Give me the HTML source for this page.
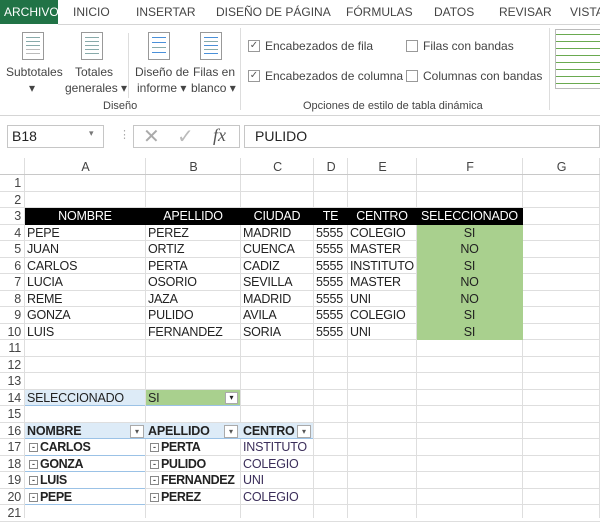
<!DOCTYPE html>
<html><head><meta charset="utf-8"><style>
*{margin:0;padding:0;box-sizing:border-box}
body{width:600px;height:518px;overflow:hidden;background:#fff;font-family:"Liberation Sans",Arial,sans-serif;position:relative;color:#222}
.a{position:absolute;white-space:nowrap}
.tab{top:5px;font-size:12px;color:#444}
.rl{font-size:12px;color:#444;text-align:center}
.ic{position:absolute;width:22px;height:28px;border:1px solid #999;background:#fff}
.ic i{position:absolute;left:3px;right:3px;height:1px;background:#8aa}
.cb{width:12px;height:12px;border:1px solid #999;background:#fff;font-size:10px;line-height:10px;text-align:center;color:#555}
.c{position:absolute;font-size:12.5px;letter-spacing:-0.2px;line-height:16px;overflow:hidden;padding-left:2px;color:#222;white-space:nowrap}
.g{position:absolute;background:#dedede}
</style></head><body>
<div class="a" style="left:0;top:0;width:58px;height:24px;background:#217346"></div>
<div class="a tab" style="left:4px;color:#fff">ARCHIVO</div>
<div class="a tab" style="left:73px">INICIO</div>
<div class="a tab" style="left:136px">INSERTAR</div>
<div class="a tab" style="left:216px">DISEÑO DE PÁGINA</div>
<div class="a tab" style="left:346px">FÓRMULAS</div>
<div class="a tab" style="left:434px">DATOS</div>
<div class="a tab" style="left:499px">REVISAR</div>
<div class="a tab" style="left:570px">VISTA</div>
<div class="a" style="left:58px;top:24px;width:542px;height:1px;background:#d5d5d5"></div>
<div class="ic" style="left:22px;top:32px"><i style="top:4px"></i><i style="top:8px"></i><i style="top:12px"></i><i style="top:16px;background:#bbb"></i><i style="top:20px;background:#bbb"></i></div>
<div class="ic" style="left:81px;top:32px"><i style="top:4px"></i><i style="top:8px"></i><i style="top:12px"></i><i style="top:16px"></i><i style="top:20px"></i></div>
<div class="ic" style="left:148px;top:32px"><i style="top:4px;background:#4a90d9"></i><i style="top:9px;background:#4a90d9"></i><i style="top:14px"></i><i style="top:19px;background:#4a90d9"></i></div>
<div class="ic" style="left:200px;top:32px"><i style="top:4px;background:#4a90d9"></i><i style="top:8px"></i><i style="top:12px;background:#4a90d9"></i><i style="top:16px"></i><i style="top:20px;background:#4a90d9"></i></div>
<div class="a rl" style="left:6px;top:65px">Subtotales</div>
<div class="a rl" style="left:29px;top:81px">▾</div>
<div class="a rl" style="left:75px;top:65px">Totales</div>
<div class="a rl" style="left:65px;top:81px">generales ▾</div>
<div class="a rl" style="left:135px;top:65px">Diseño de</div>
<div class="a rl" style="left:137px;top:81px">informe ▾</div>
<div class="a rl" style="left:193px;top:65px">Filas en</div>
<div class="a rl" style="left:191px;top:81px">blanco ▾</div>
<div class="a rl" style="left:103px;top:100px;font-size:11px">Diseño</div>
<div class="a" style="left:128px;top:33px;width:1px;height:65px;background:#ddd"></div>
<div class="a" style="left:240px;top:28px;width:1px;height:82px;background:#ddd"></div>
<div class="a cb" style="left:248px;top:40px">✓</div>
<div class="a rl" style="left:265px;top:39px">Encabezados de fila</div>
<div class="a cb" style="left:248px;top:70px">✓</div>
<div class="a rl" style="left:265px;top:69px">Encabezados de columna</div>
<div class="a cb" style="left:406px;top:40px"></div>
<div class="a rl" style="left:423px;top:39px">Filas con bandas</div>
<div class="a cb" style="left:406px;top:70px"></div>
<div class="a rl" style="left:423px;top:69px">Columnas con bandas</div>
<div class="a rl" style="left:303px;top:100px;font-size:11px">Opciones de estilo de tabla dinámica</div>
<div class="a" style="left:549px;top:28px;width:1px;height:82px;background:#ddd"></div>
<div class="a" style="left:555px;top:29px;width:50px;height:60px;border:1px solid #bbb;background:repeating-linear-gradient(#fff 0 4px,#6aaa50 4px 5px,#fff 5px 7px)"></div>
<div class="a" style="left:0;top:115px;width:600px;height:1px;background:#d5d5d5"></div>
<div class="a" style="left:7px;top:125px;width:97px;height:23px;border:1px solid #c6c6c6"></div>
<div class="a" style="left:12px;top:128px;font-size:14px">B18</div>
<div class="a" style="left:89px;top:128px;font-size:9px;color:#777">▾</div>
<div class="a" style="left:119px;top:128px;font-size:11px;color:#aaa">⋮</div>
<div class="a" style="left:133px;top:125px;width:107px;height:23px;border:1px solid #c6c6c6"></div>
<div class="a" style="left:143px;top:124px;font-size:20px;color:#aaa">✕</div>
<div class="a" style="left:177px;top:124px;font-size:20px;color:#bbb">✓</div>
<div class="a" style="left:213px;top:125px;font-size:18px;font-style:italic;font-family:'Liberation Serif',serif;color:#555">fx</div>
<div class="a" style="left:244px;top:125px;width:356px;height:23px;border:1px solid #c6c6c6"></div>
<div class="a" style="left:255px;top:128px;font-size:14px">PULIDO</div>
<div id="grid"></div>
<script>
var X=[0,25,146,241,314,348,417,523,600],H=16.5,R0=175;
var o='';
function rt(r){return R0+(r-1)*H}
var L='ABCDEFG';
for(var i=0;i<7;i++)o+='<div class="c" style="left:'+X[i+1]+'px;top:159px;width:'+(X[i+2]-X[i+1])+'px;text-align:center;color:#444;padding:0">'+L[i]+'</div>';
for(var i=1;i<9;i++)o+='<div class="g" style="left:'+(X[i]-1)+'px;top:158px;width:1px;height:360px"></div>';
o+='<div class="g" style="left:0;top:174px;width:600px;height:1px;background:#c8c8c8"></div>';
for(var r=1;r<=21;r++){o+='<div class="g" style="left:0;top:'+(rt(r+1)-1)+'px;width:600px;height:1px"></div>';
o+='<div class="c" style="left:0;top:'+rt(r)+'px;width:24px;text-align:right;padding-right:3px;color:#444">'+r+'</div>';}
function cell(c,r,t,st){o+='<div class="c" style="left:'+X[c]+'px;top:'+rt(r)+'px;width:'+(X[c+1]-X[c]-1)+'px;height:'+(H-1)+'px;'+(st||'')+'">'+t+'</div>';}
o+='<div class="a" style="left:25px;top:'+rt(3)+'px;width:498px;height:'+H+'px;background:#000"></div>';
var hd=['NOMBRE','APELLIDO','CIUDAD','TE','CENTRO','SELECCIONADO'];
for(var i=0;i<6;i++)cell(i+1,3,hd[i],'color:#fff;text-align:center;padding:0');
o+='<div class="a" style="left:417px;top:'+rt(4)+'px;width:106px;height:'+(7*H)+'px;background:#a9d08e"></div>';
var d=[['PEPE','PEREZ','MADRID','COLEGIO','SI'],['JUAN','ORTIZ','CUENCA','MASTER','NO'],['CARLOS','PERTA','CADIZ','INSTITUTO','SI'],['LUCIA','OSORIO','SEVILLA','MASTER','NO'],['REME','JAZA','MADRID','UNI','NO'],['GONZA','PULIDO','AVILA','COLEGIO','SI'],['LUIS','FERNANDEZ','SORIA','UNI','SI']];
for(var j=0;j<7;j++){var r=4+j;cell(1,r,d[j][0]);cell(2,r,d[j][1]);cell(3,r,d[j][2]);cell(4,r,'5555');cell(5,r,d[j][3]);cell(6,r,d[j][4],'text-align:center;padding:0');}
o+='<div class="a" style="left:25px;top:'+rt(14)+'px;width:120px;height:'+H+'px;background:#ddebf7;border-bottom:1px solid #9bc2e6"></div>';
o+='<div class="a" style="left:146px;top:'+rt(14)+'px;width:94px;height:'+H+'px;background:#a9d08e;border-bottom:1px solid #9bc2e6"></div>';
cell(1,14,'SELECCIONADO');cell(2,14,'SI');
o+='<div class="a" style="left:225px;top:'+(rt(14)+2)+'px;width:13px;height:12px;border:1px solid #aaa;background:#fff;font-size:8px;text-align:center;line-height:10px">▾</div>';
o+='<div class="a" style="left:25px;top:'+rt(16)+'px;width:288px;height:'+H+'px;background:#ddebf7;border-bottom:1px solid #9bc2e6"></div>';
cell(1,16,'NOMBRE','font-weight:bold');cell(2,16,'APELLIDO','font-weight:bold');cell(3,16,'CENTRO','font-weight:bold');
[130,224,297].forEach(function(x){o+='<div class="a" style="left:'+x+'px;top:'+(rt(16)+2)+'px;width:14px;height:13px;border:1px solid #aaa;background:#fff;font-size:8px;text-align:center;line-height:11px;color:#555">▾</div>';});
var p=[['CARLOS','PERTA','INSTITUTO'],['GONZA','PULIDO','COLEGIO'],['LUIS','FERNANDEZ','UNI'],['PEPE','PEREZ','COLEGIO']];
var m='<span style="display:inline-block;width:9px;height:9px;border:1px solid #888;font-size:9px;line-height:6px;text-align:center;vertical-align:1px;margin-right:2px;color:#555;letter-spacing:0">-</span>';
for(var j=0;j<4;j++){var r=17+j;
o+='<div class="a" style="left:25px;top:'+(rt(r+1)-1)+'px;width:120px;height:1px;background:#9bc2e6"></div>';
cell(1,r,m+p[j][0],'font-weight:bold;padding-left:4px;letter-spacing:-0.4px');cell(2,r,m+p[j][1],'font-weight:bold;padding-left:4px;letter-spacing:-0.4px');cell(3,r,p[j][2],'color:#3b2e5a');}
document.getElementById('grid').innerHTML=o;
</script>
</body></html>
